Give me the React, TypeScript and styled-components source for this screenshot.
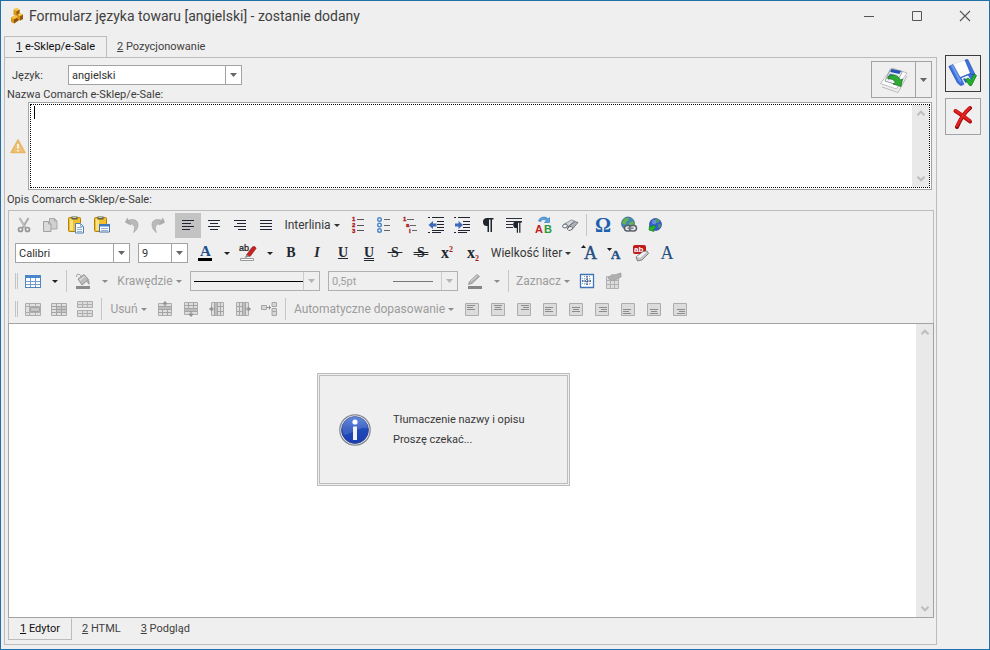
import React from "react";
import styled, { createGlobalStyle } from "styled-components";

const BG = "#efefef";
const LINE = "#bcbcbc";
const FIELD = "#a3a3a3";

const GlobalStyle = createGlobalStyle`
  *, *::before, *::after { box-sizing: border-box; }
  body { margin: 0; background: ${BG}; }
  body, button, select, textarea { font-family: Roboto, "DejaVu Sans", sans-serif; font-size: 11px; color: #3c3c3c; }
  svg { display: block; flex: none; }
`;

const Window = styled.div`
  display: flex;
  flex-direction: column;
  min-height: 100vh;
  background: ${BG};
  border: 1px solid #1f6fa8;
`;

const TitleBar = styled.header`
  display: flex;
  align-items: center;
  height: 30px;
  padding-left: 8px;
`;

const Title = styled.h1`
  flex: 1;
  margin: 0 0 0 4px;
  font-size: 14px;
  font-weight: 400;
  line-height: 20px;
  color: #404040;
`;

const WindowButton = styled.button`
  display: grid;
  place-items: center;
  width: 48px;
  height: 28px;
  padding: 0;
  border: 0;
  background: none;
`;

const Body = styled.div`
  display: flex;
  flex: 1;
  padding: 5px 8px 4px 3px;
`;

const Main = styled.main`
  display: flex;
  flex: 1;
  flex-direction: column;
  min-width: 0;
`;

const Side = styled.aside`
  display: flex;
  flex-direction: column;
  gap: 6px;
  padding: 19px 0 0 8px;
`;

const SideButton = styled.button<{ $primary?: boolean }>`
  display: grid;
  place-items: center;
  width: 36px;
  height: 37px;
  padding: 0;
  background: ${BG};
  border: 1px solid ${(p) => (p.$primary ? "#3c3c3c" : FIELD)};
`;

const Tabs = styled.div<{ $bottom?: boolean }>`
  display: flex;
  margin: ${(p) => (p.$bottom ? "0 0 4px" : "0 0 -1px")};
`;

const Tab = styled.button<{ $active?: boolean; $bottom?: boolean }>`
  height: 22px;
  padding: 0 ${(p) => (p.$active ? 11 : 9)}px;
  line-height: 20px;
  white-space: nowrap;
  color: ${(p) => (p.$active ? "#101010" : "#404040")};
  background: ${(p) => (p.$active ? BG : "transparent")};
  border: 1px solid ${(p) => (p.$active ? LINE : "transparent")};
  ${(p) => (p.$bottom ? "border-top-color" : "border-bottom-color")}: ${(p) =>
    p.$active && !p.$bottom ? BG : "transparent"};
`;

const Panel = styled.section`
  display: flex;
  flex: 1;
  flex-direction: column;
  padding: 3px 2px 0 3px;
  border: 1px solid ${LINE};
`;

const Head = styled.div`
  display: flex;
  justify-content: space-between;
  height: 41px;
  padding-right: 2px;
`;

const HeadFields = styled.div`
  padding-top: 4px;
`;

const LanguageRow = styled.div`
  display: flex;
  align-items: center;
  height: 20px;
  padding-left: 4px;
`;

const LanguageLabel = styled.label`
  width: 56px;
`;

const FieldLabel = styled.label`
  display: block;
  height: 20px;
  margin-left: -1px;
  line-height: 20px;
`;

const SplitButton = styled.div`
  display: flex;
  width: 61px;
  height: 37px;
  border: 1px solid ${FIELD};
`;

const SplitPart = styled.button<{ $arrow?: boolean }>`
  display: grid;
  place-items: center;
  flex: ${(p) => (p.$arrow ? "0 0 16px" : "1")};
  padding: 0;
  background: none;
  border: 0;
  border-left: ${(p) => (p.$arrow ? `1px solid ${FIELD}` : "0")};
`;

const Combo = styled.span<{ $w: number; $off?: boolean }>`
  display: grid;
  grid-template-columns: 1fr 16px;
  width: ${(p) => p.$w}px;
  height: 20px;
  border: 1px solid ${(p) => (p.$off ? "#b0b0b0" : FIELD)};
  background: ${(p) => (p.$off ? BG : "#fff")};
`;

const ComboSelect = styled.select`
  grid-area: 1 / 1 / 2 / 3;
  min-width: 0;
  padding: 0 18px 0 3px;
  appearance: none;
  background: transparent;
  border: 0;
  outline: 0;
  color: #303030;
  &:disabled { color: #a0a0a0; opacity: 1; }
`;

const ComboArrow = styled.span<{ $off?: boolean }>`
  grid-area: 1 / 2 / 2 / 3;
  display: grid;
  place-items: center;
  border-left: 1px solid ${(p) => (p.$off ? "#cccccc" : FIELD)};
  pointer-events: none;
`;

const ComboLine = styled.span<{ $inset: number; $thin?: boolean }>`
  grid-area: 1 / 1 / 2 / 2;
  align-self: center;
  height: 1px;
  margin: 0 ${(p) => (p.$thin ? 8 : 0)}px 0 ${(p) => p.$inset}px;
  background: ${(p) => (p.$thin ? "#777" : "#000")};
  pointer-events: none;
`;

const NameRow = styled.div`
  display: flex;
  align-items: stretch;
  height: 88px;
  padding-right: 2px;
`;

const Warning = styled.span`
  display: grid;
  place-items: center;
  width: 20px;
`;

const NameBox = styled.div`
  display: flex;
  flex: 1;
  position: relative;
  padding: 1px;
  background: #fff;
  border: 1px solid ${FIELD};
`;

const NameFocus = styled.div`
  display: flex;
  flex: 1;
  border: 1px dotted #000;
`;

const NameInput = styled.textarea`
  flex: 1;
  min-width: 0;
  padding: 1px 4px;
  border: 0;
  outline: 0;
  resize: none;
`;

const TextCursor = styled.span`
  position: absolute;
  left: 5px;
  top: 3px;
  width: 1px;
  height: 13px;
  background: #000;
`;

const ScrollTrack = styled.div`
  display: flex;
  flex-direction: column;
  justify-content: space-between;
  align-items: center;
  width: 17px;
  padding: 5px 0;
  background: #e9e9e9;
`;

const ToolBox = styled.div`
  padding-left: 2px;
  border: 1px solid ${LINE};
  border-bottom: 0;
`;

const Toolbar = styled.div`
  display: flex;
  align-items: center;
  height: 28px;
`;

const Tool = styled.button<{ $on?: boolean; $w?: number }>`
  display: grid;
  place-items: center;
  flex: none;
  width: ${(p) => p.$w ?? 26}px;
  height: 25px;
  padding: 0;
  border: 0;
  background: ${(p) => (p.$on ? "#c3c3c3" : "none")};
`;

const TextTool = styled.button<{ $w: number }>`
  display: flex;
  align-items: center;
  justify-content: center;
  gap: 3px;
  flex: none;
  width: ${(p) => p.$w}px;
  height: 25px;
  padding: 0;
  border: 0;
  background: none;
  font-size: 12px;
  white-space: nowrap;
  color: #383838;
  &:disabled { color: #9c9c9c; }
`;

const Gap = styled.span<{ $w: number }>`
  flex: none;
  width: ${(p) => p.$w}px;
`;

const Divider = styled.span`
  flex: none;
  width: 7px;
  height: 22px;
  background: linear-gradient(#c6c6c6, #c6c6c6) center / 1px 100% no-repeat;
`;

const Grip = styled.span`
  flex: none;
  width: 3px;
  height: 16px;
  margin: 0 2px 0 4px;
  border: solid #c4c4c4;
  border-width: 0 1px;
`;

const Editor = styled.div`
  display: flex;
  flex: 1;
  background: #fff;
  border: 1px solid ${FIELD};
`;

const EditorArea = styled.div`
  flex: 1;
  outline: 0;
`;

const EditorHost = styled.div`
  display: flex;
  flex: 1;
  flex-direction: column;
`;

const Notice = styled.div`
  position: absolute;
  left: 317px;
  top: 373px;
  display: flex;
  align-items: center;
  width: 253px;
  height: 113px;
  padding: 0 19px;
  background: ${BG};
  border: 3px double ${LINE};
`;

const NoticeText = styled.p`
  margin: 0 0 0 22px;
  line-height: 20px;
  color: #383838;
`;

const Glyph = styled.span<{ $color?: string; $size?: number; $line?: string; $italic?: boolean; $thin?: boolean }>`
  font-family: "Liberation Serif", serif;
  font-size: ${(p) => p.$size ?? 14}px;
  font-weight: ${(p) => (p.$thin ? 400 : 700)};
  font-style: ${(p) => (p.$italic ? "italic" : "normal")};
  line-height: 16px;
  color: ${(p) => p.$color ?? "#23272e"};
  text-decoration: ${(p) => p.$line ?? "none"};
`;

const Script = styled.span<{ $sub?: boolean }>`
  font-size: 8px;
  line-height: 0;
  color: #b01818;
  vertical-align: ${(p) => (p.$sub ? "-3px" : "6px")};
`;

function Caret({ color = "#333" }: { color?: string }) {
  return (
    <svg width="7" height="4" viewBox="0 0 7 4">
      <path d="M0 0h7L3.500 4z" fill={color} />
    </svg>
  );
}

function SmallCaret({ color = "#333" }: { color?: string }) {
  return (
    <svg width="6" height="3" viewBox="0 0 6 3">
      <path d="M0 0h6L3 3z" fill={color} />
    </svg>
  );
}

function Chevron({ down }: { down?: boolean }) {
  return (
    <svg width="8" height="6" viewBox="0 0 8 6">
      <path d={down ? "M.5.8 4 4.300 7.500.8" : "M.5 5.200 4 1.700 7.500 5.200"} fill="none" stroke="#bdbdbd" strokeWidth="2" />
    </svg>
  );
}

function Icon({ children, size = 18 }: { children: React.ReactNode; size?: number }) {
  return (
    <svg width={size} height={size} viewBox={`0 0 ${size} ${size}`} aria-hidden="true">
      {children}
    </svg>
  );
}

const AppIcon = () => (
  <Icon size={16}>
    <path d="M4.500 1.500 7.500 0l3 1.500V6.500l-3 1.500-3-1.500z" fill="#d79a1e" />
    <path d="M7.500 3v5l3-1.500v-5z" fill="#9a5c0a" />
    <path d="m4.500 1.500 3 1.500 3-1.500L7.500 0z" fill="#f6cc55" />
    <path d="M2 9.500 6.500 7l3.500 2v3l-5 3.500-3-1.500z" fill="#d8941a" />
    <path d="m5 11 5-2.500V12l-5 3.500z" fill="#8e4d08" />
    <path d="m2 9.500 4.500-2.500 3.500 2-5 2.300z" fill="#f3c143" />
    <path d="m8.500 6.500 2.500-1.200 3 1.200V11l-3 1.500-2.500-1.500z" fill="#d8941a" />
    <path d="m11 8 3-1.500V11l-3 1.500z" fill="#995508" />
    <path d="M8.500 6.500 11 5.300l3 1.200L11 8z" fill="#f6cc55" />
  </Icon>
);

const CutIcon = () => (
  <Icon>
    <path d="m4.500 2 6 10M13.500 2l-6 10" stroke="#a9a9a9" strokeWidth="2" />
    <path d="m4.500 2.500 5.500 9" stroke="#d6d6d6" strokeWidth=".7" />
    <circle cx="5.500" cy="13.500" r="2" fill="none" stroke="#979797" strokeWidth="1.700" />
    <circle cx="12.500" cy="13.500" r="2" fill="none" stroke="#979797" strokeWidth="1.700" />
  </Icon>
);

const CopyIcon = () => (
  <Icon>
    <path d="M8.500 2.500h5l2.500 2.500v8H8.500z" fill="#d0d0d0" stroke="#a8a8a8" />
    <path d="M2.500 5.500h5L10 8v7.500H2.500z" fill="#dadada" stroke="#a0a0a0" />
    <path d="M7.500 5.500V8H10M13.500 2.500V5H16" fill="none" stroke="#a8a8a8" />
  </Icon>
);

const PasteIcon = ({ dialog }: { dialog?: boolean }) => (
  <Icon>
    <rect x="1.500" y="1.500" width="12" height="14" rx="1" fill="#f2c029" stroke="#b08110" />
    <path d="M3 3h3v11.500H3z" fill="#fbe184" />
    <path d="M4.500.500h6v3h-6z" fill="#5a5d45" />
    <path d="M5.500 1h4v1h-4z" fill="#c9cbb4" />
    {dialog ? (
      <>
        <path d="M6.500 8.500h10v7.500h-10z" fill="#fff" stroke="#44709f" />
        <path d="M6 8h11v2.500H6z" fill="#3d7bc2" />
        <path d="M8 12.500h7M8 14.500h7" stroke="#8fb1d8" />
      </>
    ) : (
      <>
        <path d="M8.500 7.500h5l3 3v6.500h-8z" fill="#f6faff" stroke="#5381ae" />
        <path d="M13.500 7.500v3h3M10 11.500h5M10 13.500h5M10 15.500h5" stroke="#8fb1d8" fill="none" />
      </>
    )}
  </Icon>
);

const UndoIcon = ({ redo }: { redo?: boolean }) => (
  <Icon>
    <g transform={redo ? "matrix(-1 0 0 1 18 0)" : undefined}>
      <path d="M4 5c6-3 11.500-1 11 4.500-.3 3-2 5.500-4.500 7C12.500 12 12 7 5.500 8z" fill="#b9b9b9" stroke="#a3a3a3" strokeWidth=".6" />
      <path d="M2 6.500 4.200 1.500l4.300 8z" fill="#ababab" />
    </g>
  </Icon>
);

const lineSets: Record<string, [number, number][]> = {
  left: [[3, 15], [3, 12], [3, 15], [3, 11]],
  center: [[3, 15], [5, 13], [3, 15], [5, 13]],
  right: [[3, 15], [6, 15], [3, 15], [7, 15]],
  full: [[3, 15], [3, 15], [3, 15], [3, 15]],
};

const AlignIcon = ({ kind }: { kind: string }) => (
  <Icon>
    {lineSets[kind].map(([a, b], i) => (
      <path key={i} d={`M${a} ${4.5 + i * 3}H${b}`} stroke="#1f2430" />
    ))}
  </Icon>
);

const Digits = ({ list }: { list: [string, number, number][] }) => (
  <>
    {list.map(([t, x, y]) => (
      <text key={t} x={x} y={y} fontFamily="Liberation Sans, sans-serif" fontWeight="700" fontSize="6" fill="#ad1414" stroke="#ad1414" strokeWidth=".3">
        {t}
      </text>
    ))}
  </>
);

const NumberedIcon = () => (
  <Icon>
    <Digits list={[["1", 3, 5], ["2", 3, 11], ["3", 3, 17]]} />
    <path d="M8 3.500h7M8 9.500h7M8 14.500h7" stroke="#555" />
  </Icon>
);

const BulletIcon = () => (
  <Icon>
    {[3.5, 9, 14.500].map((y) => (
      <circle key={y} cx="4.500" cy={y} r="1.800" fill="#fff" stroke="#4784c8" strokeWidth="1.400" />
    ))}
    <path d="M9 3.500h6M9 9.500h6M9 14.500h6" stroke="#666" />
  </Icon>
);

const MultiIcon = () => (
  <Icon>
    <Digits list={[["1", 2, 5], ["a", 5, 11], ["i", 8, 17]]} />
    <path d="M6 3.500h7M9 9.500h6M11 14.500h5" stroke="#666" />
  </Icon>
);

const IndentIcon = ({ more }: { more?: boolean }) => (
  <Icon>
    <path d="M1 1.500h2M5 1.500h12M10 5.500h7M10 8.500h7M10 11.500h7M5 14.500h12M1 16.500h2M5 16.500h9" stroke="#1f2430" />
    {more ? <path d="M2 7.500h3.500V5L10 9l-4.500 4v-2.500H2z" fill="#3f69b8" /> : <path d="M9.500 7.500H6V5L1.500 9 6 13v-2.500h3.500z" fill="#3f69b8" />}
  </Icon>
);

const MarkIcon = ({ lines }: { lines?: boolean }) => (
  <Icon>
    {lines && <path d="M1 2.500h16M1 5.500h16M1 8.500h7M1 11.500h7" stroke="#2b303a" />}
    <g transform={lines ? "translate(5 4) scale(.8)" : undefined}>
      <path d="M7.500 2h7v1.500H13V16h-1.500V3.500H10V16H8.500V10a4 4 0 0 1-1-8z" fill="#20242c" />
    </g>
  </Icon>
);

const ReplaceIcon = () => (
  <Icon>
    <path d="M3.500 5c1-4.500 7.500-5 9.500-2L14.500 1.500v5H9.500L11.300 4.700C9.500 3 6.500 3 6 5.500z" fill="#5aa3dc" stroke="#2c73b4" strokeWidth=".6" />
    <text x="0" y="17" fontFamily="Liberation Sans, sans-serif" fontWeight="700" fontSize="11" fill="#c31f1f">A</text>
    <text x="9" y="17" fontFamily="Liberation Sans, sans-serif" fontWeight="700" fontSize="11" fill="#2a9a3a">B</text>
  </Icon>
);

const FindIcon = () => (
  <Icon>
    <path d="m2.500 8.500 8-4.500 3 1-8 7z" fill="#d3d6da" stroke="#6b6f75" strokeWidth=".7" />
    <path d="m7 11 7-5.500 3 1-6 7z" fill="#aeb3b9" stroke="#55595f" strokeWidth=".7" />
    <ellipse cx="4" cy="10" rx="2.500" ry="1.800" fill="#f4f5f6" stroke="#5b5f65" strokeWidth=".9" transform="rotate(-20 4 10)" />
    <ellipse cx="9" cy="12.500" rx="2.500" ry="1.800" fill="#f4f5f6" stroke="#5b5f65" strokeWidth=".9" transform="rotate(-20 9 12.500)" />
  </Icon>
);

const LinkIcon = () => (
  <Icon>
    <circle cx="8" cy="7.500" r="6.500" fill="#3f88b8" stroke="#2e5e7e" strokeWidth=".7" />
    <path d="M4 3c2-1.500 5-1.500 5 0S6 5 6 7s-3 2-4-.5zM9 7l4-2 1 3-3 3-2-1z" fill="#69b04f" />
    <rect x="4.500" y="9.500" width="7" height="5.500" rx="2.700" fill="#e8eaec" stroke="#59606a" strokeWidth="1.500" />
    <rect x="9.500" y="9.500" width="7" height="5.500" rx="2.700" fill="#e8eaec" stroke="#59606a" strokeWidth="1.500" />
    <path d="M7.500 12.200h6" stroke="#7a828c" strokeWidth="1.600" />
  </Icon>
);

const GlobeIcon = () => (
  <Icon>
    <circle cx="9.500" cy="8.500" r="6" fill="#3560cc" stroke="#24408c" strokeWidth=".7" />
    <path d="M9 3.500c2-1 5 0 4.500 2S10 6 9 8zM12.500 8l2.500.5-1 3.500-2-1z" fill="#4c9a6c" />
    <circle cx="8" cy="6" r="2.200" fill="#7c9cec" opacity=".7" />
    <path d="m3 14 .5-4 1.500 1 3-2 2 2.500-3 2.500 1 1.500z" fill="#26b52b" stroke="#158018" strokeWidth=".7" />
  </Icon>
);

const FontColorIcon = () => (
  <Icon>
    <text x="4" y="12" fontFamily="Liberation Serif, serif" fontWeight="700" fontSize="15" fill="#1d4f8c">A</text>
    <path d="M2 14h14v3H2z" fill="#000" />
  </Icon>
);

const HighlightIcon = () => (
  <Icon>
    <text x="0" y="7" fontFamily="Liberation Sans, sans-serif" fontSize="9" fill="#111" stroke="#111" strokeWidth=".2">ab</text>
    <path d="M12.500 4c1.500-2 4-2 4.500.5l-6 8-3.500-1.500z" fill="#cf2020" stroke="#7e1616" strokeWidth=".6" />
    <path d="m7.500 10.500 3 2-5 1.500z" fill="#8d8d8d" />
    <path d="M1.500 14.500h13v2h-13z" fill="#fff" stroke="#999" />
  </Icon>
);

const EraseIcon = () => (
  <Icon>
    <rect x="1" y="1" width="13" height="9" rx="2" fill="#c01a1a" />
    <text x="2" y="8" fontFamily="Liberation Sans, sans-serif" fontWeight="700" fontSize="8" fill="#fff">ab</text>
    <path d="m4 13 7-5.500 4-.5 1.500 2.500L10 16l-4.500 1z" fill="#c4c4c4" stroke="#6c6c6c" strokeWidth=".8" />
    <path d="m4.500 13 7-5 3.500-.5-6.500 6z" fill="#f6f6f6" />
  </Icon>
);

const TableIcon = () => (
  <Icon>
    <rect x="1.500" y="3.500" width="15" height="12" fill="#fff" stroke="#4f83bd" />
    <path d="M1 3h16v3H1z" fill="#4b86cc" />
    <path d="M1.500 9.500h15M1.500 12.500h15M6.500 6v9M11.500 6v9" stroke="#6f9dcc" />
  </Icon>
);

const MergeIcon = () => (
  <Icon>
    <path d="M1.500 3.500h15v12h-15z" fill="#e0e0e0" stroke="#ababab" />
    <path d="M1.500 6.500h15M1.500 12.500h15M5.500 3.500v12M11.500 3.500v3M11.500 12.500v3" stroke="#b0b0b0" />
    <path d="M6.500 7.500h9v4h-9z" fill="#c4c4c4" stroke="#a2a2a2" />
  </Icon>
);

const SplitCellIcon = () => (
  <Icon>
    <path d="M1.500 3.500h15v12h-15z" fill="#e0e0e0" stroke="#ababab" />
    <path d="M6 7h10v5H6z" fill="#c4c4c4" />
    <path d="M1.500 6.500h15M1.500 9.500h15M1.500 12.500h15M6.500 3.500v12M11.500 3.500v12" stroke="#a4a4a4" />
  </Icon>
);

const SplitTableIcon = () => (
  <Icon>
    <path d="M1.500 1.500h15v6h-15zM1.500 10.500h15v6h-15z" fill="#dcdcdc" stroke="#acacac" />
    <path d="M1.500 4.500h15M1.500 13.500h15M6.500 1.500v6M11.500 1.500v6M6.500 10.500v6M11.500 10.500v6" stroke="#b0b0b0" />
  </Icon>
);

const InsertIcon = ({ turn }: { turn: number }) => (
  <Icon>
    <g transform={`rotate(${turn} 9 9)`}>
      <path d="M2.500 3.500h13v12h-13z" fill="#dedede" stroke="#acacac" />
      <path d="M3 6h12v4H3z" fill="#bcbcbc" />
      <path d="M2.500 6.500h13M2.500 9.500h13M2.500 12.500h13M6.500 9.500v6M11.500 9.500v6" stroke="#a4a4a4" />
      <path d="M9 2v5M7 4l2-2.500L11 4z" stroke="#929292" fill="#929292" />
    </g>
  </Icon>
);

const BranchIcon = () => (
  <Icon>
    <path d="M1.500 5.500h5v4h-5zM12 2.500h4.500v4H12zM12 8.500h4.500v3H12zM12 11.500h4.500v4H12z" fill="#d6d6d6" stroke="#a6a6a6" />
    <path d="M7 7.500h4M9.500 5.500v4" stroke="#8e8e8e" />
  </Icon>
);

const BucketIcon = () => (
  <Icon>
    <path d="m4 7 6-4.500 4.500 5L8 13z" fill="#bcbcbc" stroke="#939393" />
    <path d="M3 5C1 2 6 0 8.500 7" stroke="#909090" fill="none" />
    <path d="M13 7c3 1 3 4 2 6-1.500-1.500-2.500-3-2-6z" fill="#a2a2a2" />
    <path d="m5.500 7.500 4.500-3.500 1 1-5 4z" fill="#dedede" />
    <path d="M2 14h14v3H2z" fill="#8b8b8b" />
  </Icon>
);

const PencilIcon = () => (
  <Icon>
    <path d="m2.500 12.500 1-3L11 2.500l2.500 2-7.500 7z" fill="#b0b0b0" stroke="#929292" strokeWidth=".8" />
    <path d="m4.500 9.500 7-6" stroke="#dedede" />
    <path d="M2 14h14v3H2z" fill="#858585" />
  </Icon>
);

const GridIcon = () => (
  <Icon>
    <path d="M2.500 2.500h13v13h-13z" fill="#fff" stroke="#3e74b8" strokeWidth="1.300" />
    <path d="M9 4v10M4 9h10" stroke="#22427c" strokeWidth="1.400" strokeDasharray="1.500 1" />
    <path d="M6.500 4v10M11.500 4v10M4 6.500h10M4 11.500h10" stroke="#6482b4" strokeWidth=".8" strokeDasharray="1 1.500" />
  </Icon>
);

const PropsIcon = () => (
  <Icon>
    <path d="M2.500 4.500h12v12h-12z" fill="#ddd" stroke="#b0b0b0" />
    <path d="M2.500 8.500h12M2.500 12.500h12M6.500 8v8M10.500 8v8" stroke="#b0b0b0" />
    <path d="m4 6 4-3.500 2 .5 7-2V5l-4 2-3 1.500L6 8z" fill="#b0b0b0" stroke="#9c9c9c" strokeWidth=".7" />
  </Icon>
);

const CellIcon = ({ h, v }: { h: number; v: number }) => {
  const y = [5.5, 7.5, 9.5][v];
  const long = [4, 5, 6][h];
  const short = [4, 6, 8][h];
  return (
    <Icon>
      <path d="M2.500 3.500h13v12h-13z" fill="#dcdcdc" stroke="#adadad" />
      <path d={`M${long} ${y}h8M${short} ${y + 2}h6M${long} ${y + 4}h8`} stroke="#8c8c8c" />
    </Icon>
  );
};

const SizeIcon = ({ small }: { small?: boolean }) => (
  <Icon>
    <text x={small ? 5 : 4} y="15" fontFamily="Liberation Serif, serif" fontWeight={small ? "700" : "400"} fontSize={small ? 13 : 18} fill="#1f4e80" stroke="#1f4e80" strokeWidth=".4">A</text>
    {small ? <path d="M1 4h5L3.500 7z" fill="#1c1c1c" /> : <path d="M1 4h5L3.500 1z" fill="#1c1c1c" />}
  </Icon>
);

const TranslateIcon = () => (
  <Icon size={30}>
    <path d="m3 22 16 5.500L28 11" fill="none" stroke="#b5b5b5" strokeWidth=".9" />
    <path d="m1.500 18.500 16 5.500L28 8 13 3z" fill="#fff" stroke="#b0b0b0" strokeWidth=".8" />
    <path d="m6 16 5.500-12 12 2.500-7 13z" fill="#eef1f7" stroke="#8a8a8a" strokeWidth=".8" />
    <path d="m12.500 4 9.500 2-1.500 3L11 7z" fill="#2455b5" />
    <path d="m8 13 3-4.500 5 1.500-2 4z" fill="#5078b8" />
    <path d="M9 12c5-3.500 10.500-2 12 3l2.500-1L22 21.500l-8-2.500 2.500-1.500C15 14.500 12.500 13.500 9 14z" fill="#2faa35" stroke="#14701c" strokeWidth=".7" />
  </Icon>
);

const SaveIcon = () => (
  <Icon size={30}>
    <path d="m5.500 5 12-4 6 13-11 5z" fill="#fff" stroke="#d2d7e0" strokeWidth=".6" />
    <path d="m.8 7.500 4-2L12 18.500l10-4 4.500 0 1 3.500-13 8-2 .5-3-2.500z" fill="#3c70de" stroke="#1c46a8" strokeWidth=".6" />
    <path d="m17 1 2.800-.5L27 15.500l-4 0z" fill="#3c73df" stroke="#1c46a8" strokeWidth=".6" />
    <path d="m2.800 6.600 2-1L13.500 22l-1.500 2z" fill="#6c98ee" />
    <path d="m13.500 19 6.500-2.500 3 5-6.500 4z" fill="#f4f6fb" />
    <path d="m15 20 2-1 2.500 4-2 1z" fill="#2e5fc2" />
    <path d="m17.500 20.500 2.500-1.500 2.500 2.500 3.500-6.500 2.500 1.500-5 10h-2z" fill="#22b12b" stroke="#0f7518" strokeWidth=".7" />
  </Icon>
);

const CancelIcon = () => (
  <Icon size={24}>
    <path d="M6 22C9 15 14 7 19 3" stroke="#8e0c0c" strokeWidth="4" strokeLinecap="round" fill="none" />
    <path d="M4.500 6c5 3 10 7 14.500 10.500" stroke="#a80e0e" strokeWidth="4" strokeLinecap="round" fill="none" />
    <path d="M6 21C9 14.500 13.500 7.500 18.500 3M4.500 5.500C10 9 14 12 18.500 15.500" stroke="#e62020" strokeWidth="2.500" strokeLinecap="round" fill="none" />
  </Icon>
);

const InfoIcon = () => (
  <Icon size={32}>
    <defs>
      <linearGradient id="info" x1="0" y1="0" x2="0" y2="1">
        <stop offset="0" stopColor="#4a76d8" />
        <stop offset=".5" stopColor="#2049b8" />
        <stop offset="1" stopColor="#1a3cb0" />
      </linearGradient>
    </defs>
    <circle cx="16" cy="16" r="15.200" fill="#f4f4f4" stroke="#7f858e" strokeWidth="1.200" />
    <circle cx="16" cy="16" r="13.500" fill="url(#info)" stroke="#27408f" strokeWidth=".8" />
    <path d="M3 15a13 13 0 0 1 26-1C22 12 12 20 5 21z" fill="#fff" opacity=".14" />
    <circle cx="16" cy="8" r="2.600" fill="#fff" />
    <path d="M14 12.500h4V26h-4z" fill="#f2f2f2" />
  </Icon>
);

const WarningIcon = () => (
  <Icon size={16}>
    <path d="M8 2 15 14.500H1z" fill="#eec176" stroke="#e6b667" strokeWidth="1.500" strokeLinejoin="round" />
    <path d="M8 6v4.500M8 12v1.500" stroke="#fff" strokeWidth="1.600" />
  </Icon>
);

type ItemProps = { label: string; off?: boolean; on?: boolean; children: React.ReactNode; w?: number };
const Item = ({ label, off, on, children, w }: ItemProps) => (
  <Tool type="button" aria-label={label} disabled={off} $on={on} $w={w}>
    {children}
  </Tool>
);

const Drop = ({ label, off }: { label: string; off?: boolean }) => (
  <Item label={label} off={off} w={17}>
    <SmallCaret color={off ? "#8c8c8c" : "#222"} />
  </Item>
);

const Menu = ({ text, w, off }: { text: string; w: number; off?: boolean }) => (
  <TextTool type="button" $w={w} disabled={off}>
    {text}
    <SmallCaret color={off ? "#8c8c8c" : "#333"} />
  </TextTool>
);

type SelectProps = { id?: string; label?: string; value: string; w: number; off?: boolean; children?: React.ReactNode };
const Select = ({ id, label, value, w, off, children }: SelectProps) => (
  <Combo $w={w} $off={off}>
    <ComboSelect id={id} aria-label={label} disabled={off}>
      <option>{value}</option>
    </ComboSelect>
    {children}
    <ComboArrow $off={off}>
      <Caret color={off ? "#b4b4b4" : "#666"} />
    </ComboArrow>
  </Combo>
);

const insertions: [string, number][] = [
  ["Wstaw wiersz powyżej", 0],
  ["Wstaw wiersz poniżej", 180],
  ["Wstaw kolumnę z lewej", 270],
  ["Wstaw kolumnę z prawej", 90],
];

export default function App() {
  return (
    <Window>
      <GlobalStyle />
      <TitleBar>
        <AppIcon />
        <Title>Formularz języka towaru [angielski] - zostanie dodany</Title>
        <WindowButton type="button" aria-label="Minimalizuj">
          <Icon size={12}><path d="M1 6.500h10" stroke="#555" /></Icon>
        </WindowButton>
        <WindowButton type="button" aria-label="Maksymalizuj">
          <Icon size={12}><path d="M1.500 1.500h9v9h-9z" stroke="#555" fill="none" /></Icon>
        </WindowButton>
        <WindowButton type="button" aria-label="Zamknij">
          <Icon size={12}><path d="m1 1 10 10M11 1 1 11" stroke="#555" strokeWidth="1.100" /></Icon>
        </WindowButton>
      </TitleBar>

      <Body>
        <Main>
          <Tabs role="tablist">
            <Tab type="button" role="tab" aria-selected $active><u>1</u> e-Sklep/e-Sale</Tab>
            <Tab type="button" role="tab"><u>2</u> Pozycjonowanie</Tab>
          </Tabs>

          <Panel>
            <Head>
              <HeadFields>
                <LanguageRow>
                  <LanguageLabel htmlFor="language">Język:</LanguageLabel>
                  <Select id="language" value="angielski" w={174} />
                </LanguageRow>
                <FieldLabel htmlFor="name">Nazwa Comarch e-Sklep/e-Sale:</FieldLabel>
              </HeadFields>
              <SplitButton>
                <SplitPart type="button" aria-label="Tłumacz"><TranslateIcon /></SplitPart>
                <SplitPart type="button" aria-label="Opcje tłumaczenia" $arrow><Caret color="#666" /></SplitPart>
              </SplitButton>
            </Head>

            <NameRow>
              <Warning><WarningIcon /></Warning>
              <NameBox>
                <NameFocus>
                  <NameInput id="name" />
                  <ScrollTrack><Chevron /><Chevron down /></ScrollTrack>
                </NameFocus>
                <TextCursor />
              </NameBox>
            </NameRow>

            <FieldLabel as="div" id="description">Opis Comarch e-Sklep/e-Sale:</FieldLabel>

            <EditorHost>
              <ToolBox>
                <Toolbar role="toolbar">
                  <Item label="Wytnij" off><CutIcon /></Item>
                  <Item label="Kopiuj" off><CopyIcon /></Item>
                  <Item label="Wklej"><PasteIcon /></Item>
                  <Item label="Wklej specjalnie"><PasteIcon dialog /></Item>
                  <Gap $w={4} />
                  <Item label="Cofnij" off><UndoIcon /></Item>
                  <Item label="Ponów" off><UndoIcon redo /></Item>
                  <Gap $w={4} />
                  <Item label="Do lewej" on><AlignIcon kind="left" /></Item>
                  <Item label="Do środka"><AlignIcon kind="center" /></Item>
                  <Item label="Do prawej"><AlignIcon kind="right" /></Item>
                  <Item label="Wyjustuj"><AlignIcon kind="full" /></Item>
                  <Menu text="Interlinia" w={66} />
                  <Item label="Numerowanie"><NumberedIcon /></Item>
                  <Item label="Punktory"><BulletIcon /></Item>
                  <Item label="Lista wielopoziomowa"><MultiIcon /></Item>
                  <Item label="Zmniejsz wcięcie"><IndentIcon /></Item>
                  <Item label="Zwiększ wcięcie"><IndentIcon more /></Item>
                  <Item label="Znaki ukryte"><MarkIcon /></Item>
                  <Item label="Akapit"><MarkIcon lines /></Item>
                  <Gap $w={4} />
                  <Item label="Zamień"><ReplaceIcon /></Item>
                  <Item label="Znajdź"><FindIcon /></Item>
                  <Divider />
                  <Item label="Symbol"><Glyph $color="#1b5fae" $size={20}>Ω</Glyph></Item>
                  <Item label="Hiperłącze"><LinkIcon /></Item>
                  <Item label="Strona"><GlobeIcon /></Item>
                </Toolbar>

                <Toolbar role="toolbar">
                  <Gap $w={4} />
                  <Select label="Czcionka" value="Calibri" w={115} />
                  <Gap $w={8} />
                  <Select label="Rozmiar" value="9" w={50} />
                  <Gap $w={4} />
                  <Item label="Kolor tekstu"><FontColorIcon /></Item>
                  <Drop label="Wybierz kolor tekstu" />
                  <Item label="Wyróżnienie"><HighlightIcon /></Item>
                  <Drop label="Wybierz wyróżnienie" />
                  <Item label="Pogrubienie"><Glyph>B</Glyph></Item>
                  <Item label="Kursywa"><Glyph $italic>I</Glyph></Item>
                  <Item label="Podkreślenie"><Glyph $line="underline">U</Glyph></Item>
                  <Item label="Podwójne podkreślenie"><Glyph $line="underline double">U</Glyph></Item>
                  <Item label="Przekreślenie"><Glyph $line="line-through">&nbsp;S&nbsp;</Glyph></Item>
                  <Item label="Podwójne przekreślenie"><Glyph $line="line-through double">&nbsp;S&nbsp;</Glyph></Item>
                  <Item label="Indeks górny"><Glyph $size={16}>x<Script>2</Script></Glyph></Item>
                  <Item label="Indeks dolny"><Glyph $size={16}>x<Script $sub>2</Script></Glyph></Item>
                  <Menu text="Wielkość liter" w={90} />
                  <Item label="Powiększ czcionkę"><SizeIcon /></Item>
                  <Item label="Pomniejsz czcionkę"><SizeIcon small /></Item>
                  <Item label="Wyczyść formatowanie"><EraseIcon /></Item>
                  <Item label="Czcionka…"><Glyph $color="#1f4e80" $size={18} $thin>A</Glyph></Item>
                </Toolbar>

                <Toolbar role="toolbar">
                  <Grip />
                  <Item label="Tabela"><TableIcon /></Item>
                  <Drop label="Wstaw tabelę" />
                  <Divider />
                  <Item label="Cieniowanie" off><BucketIcon /></Item>
                  <Drop label="Kolor cieniowania" off />
                  <Menu text="Krawędzie" w={73} off />
                  <Gap $w={4} />
                  <Select label="Styl linii" value="" w={130} off><ComboLine $inset={3} /></Select>
                  <Gap $w={8} />
                  <Select label="Grubość linii" value="0,5pt" w={130} off><ComboLine $inset={64} $thin /></Select>
                  <Gap $w={4} />
                  <Item label="Kolor pióra" off><PencilIcon /></Item>
                  <Drop label="Wybierz kolor pióra" off />
                  <Divider />
                  <Menu text="Zaznacz" w={62} off />
                  <Item label="Linie siatki"><GridIcon /></Item>
                  <Item label="Właściwości tabeli" off><PropsIcon /></Item>
                </Toolbar>

                <Toolbar role="toolbar">
                  <Grip />
                  <Item label="Scal komórki" off><MergeIcon /></Item>
                  <Item label="Podziel komórki" off><SplitCellIcon /></Item>
                  <Item label="Podziel tabelę" off><SplitTableIcon /></Item>
                  <Divider />
                  <Menu text="Usuń" w={47} off />
                  {insertions.map(([label, turn]) => (
                    <Item key={label} label={label} off><InsertIcon turn={turn} /></Item>
                  ))}
                  <Item label="Wstaw komórki" off><BranchIcon /></Item>
                  <Divider />
                  <Menu text="Automatyczne dopasowanie" w={170} off />
                  {[0, 1, 2].map((v) =>
                    [0, 1, 2].map((h) => (
                      <Item key={`${v}${h}`} label={`Wyrównanie komórki ${v * 3 + h + 1}`} off>
                        <CellIcon h={h} v={v} />
                      </Item>
                    ))
                  )}
                </Toolbar>
              </ToolBox>

              <Editor>
                <EditorArea role="textbox" aria-labelledby="description" contentEditable suppressContentEditableWarning />
                <ScrollTrack><Chevron /><Chevron down /></ScrollTrack>
              </Editor>
            </EditorHost>

            <Tabs role="tablist" $bottom>
              <Tab type="button" role="tab" aria-selected $active $bottom><u>1</u> Edytor</Tab>
              <Tab type="button" role="tab" $bottom><u>2</u> HTML</Tab>
              <Tab type="button" role="tab" $bottom><u>3</u> Podgląd</Tab>
            </Tabs>
          </Panel>
        </Main>

        <Side>
          <SideButton type="button" aria-label="Zapisz" $primary><SaveIcon /></SideButton>
          <SideButton type="button" aria-label="Anuluj"><CancelIcon /></SideButton>
        </Side>
      </Body>

      <Notice role="status">
        <InfoIcon />
        <NoticeText>
          Tłumaczenie nazwy i opisu
          <br />
          Proszę czekać...
        </NoticeText>
      </Notice>
    </Window>
  );
}
